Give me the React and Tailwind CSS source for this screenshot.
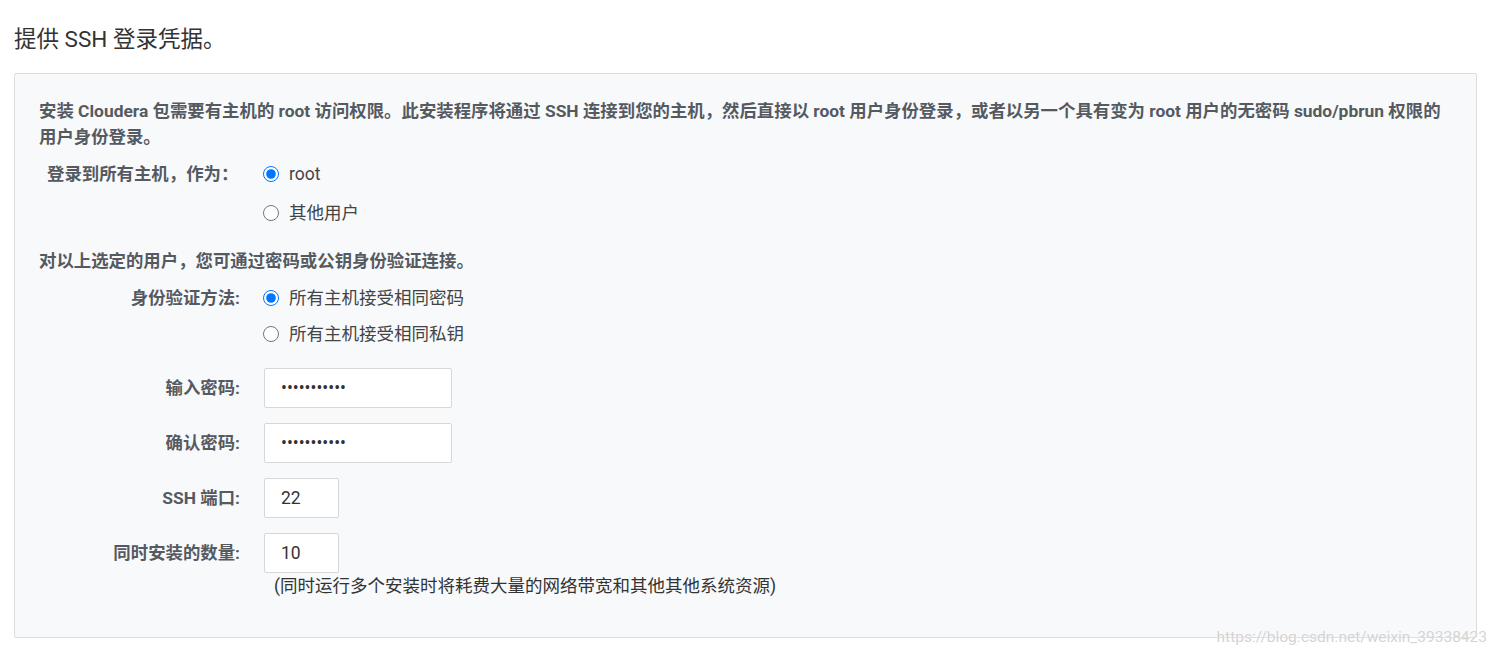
function Radio({ checked, label }) {
  return (
    <label className="flex items-center gap-[10px] text-[17.5px] text-[#444] font-normal">
      <input type="radio" defaultChecked={checked} name={label} className="m-0 w-[16px] h-[16px] accent-[#0075ff]" />
      <span>{label}</span>
    </label>
  );
}

function Field({ label, value, width, type = 'text' }) {
  return (
    <div className="flex items-center">
      <div className="w-[201px] text-right font-bold text-[#555a61] text-[17.4px]">{label}</div>
      <input
        type={type}
        defaultValue={value}
        className={`ml-[24px] h-[40px] ${width} bg-white border border-[#d5d7da] rounded-[2px] pl-4 text-[17.5px] text-[#333] outline-none`}
      />
    </div>
  );
}

export default function App() {
  return (
    <div className="relative w-[1497px] h-[656px] bg-white font-['Roboto','Noto_Sans_CJK_SC',sans-serif]">
      <div className="pl-[14px] pt-[24px]">
        <h1 className="text-[22.5px] leading-[30px] text-[#333] font-normal">提供 SSH 登录凭据。</h1>
        <div className="mt-[19px] w-[1463px] h-[565px] border border-[#dcdde0] rounded-[2px] bg-[#f8f9fb] pl-[24px] pr-[20px] pt-[24px]">
          <p className="text-[17.4px] leading-[26px] font-bold text-[#555a61]">
            安装 Cloudera 包需要有主机的 root 访问权限。此安装程序将通过 SSH 连接到您的主机，然后直接以 root 用户身份登录，或者以另一个具有变为 root 用户的无密码 sudo/pbrun 权限的用户身份登录。
          </p>
          <div className="flex mt-[11px]">
            <div className="w-[224px] pl-[8px] font-bold text-[#555a61] text-[17.4px] leading-[26px] whitespace-nowrap">登录到所有主机，作为：</div>
            <div className="flex flex-col gap-[13px]">
              <div className="h-[26px] flex items-center"><Radio checked label="root" /></div>
              <div className="h-[26px] flex items-center"><Radio label="其他用户" /></div>
            </div>
          </div>
          <p className="mt-[22px] text-[17.4px] leading-[26px] font-bold text-[#555a61]">对以上选定的用户，您可通过密码或公钥身份验证连接。</p>
          <div className="flex mt-[11px]">
            <div className="w-[201px] text-right font-bold text-[#555a61] text-[17.4px] leading-[26px]">身份验证方法:</div>
            <div className="ml-[23px] flex flex-col gap-[10px]">
              <div className="h-[26px] flex items-center"><Radio checked label="所有主机接受相同密码" /></div>
              <div className="h-[26px] flex items-center"><Radio label="所有主机接受相同私钥" /></div>
            </div>
          </div>
          <div className="flex flex-col gap-[15px] mt-[21px]">
            <Field label="输入密码:" value="cloudera123" width="w-[188px]" type="password" />
            <Field label="确认密码:" value="cloudera123" width="w-[188px]" type="password" />
            <Field label="SSH 端口:" value="22" width="w-[75px]" />
            <Field label="同时安装的数量:" value="10" width="w-[75px]" />
          </div>
          <div className="ml-[235px] mt-[1px] text-[17.5px] leading-[24px] text-[#333]">(同时运行多个安装时将耗费大量的网络带宽和其他其他系统资源)</div>
        </div>
      </div>
      <div className="absolute right-[10px] top-[626px] text-[15.5px] text-[#d4d4d4] font-['Roboto',sans-serif] [text-shadow:0_0_2px_#fff]">https://blog.csdn.net/weixin_39338423</div>
    </div>
  );
}
